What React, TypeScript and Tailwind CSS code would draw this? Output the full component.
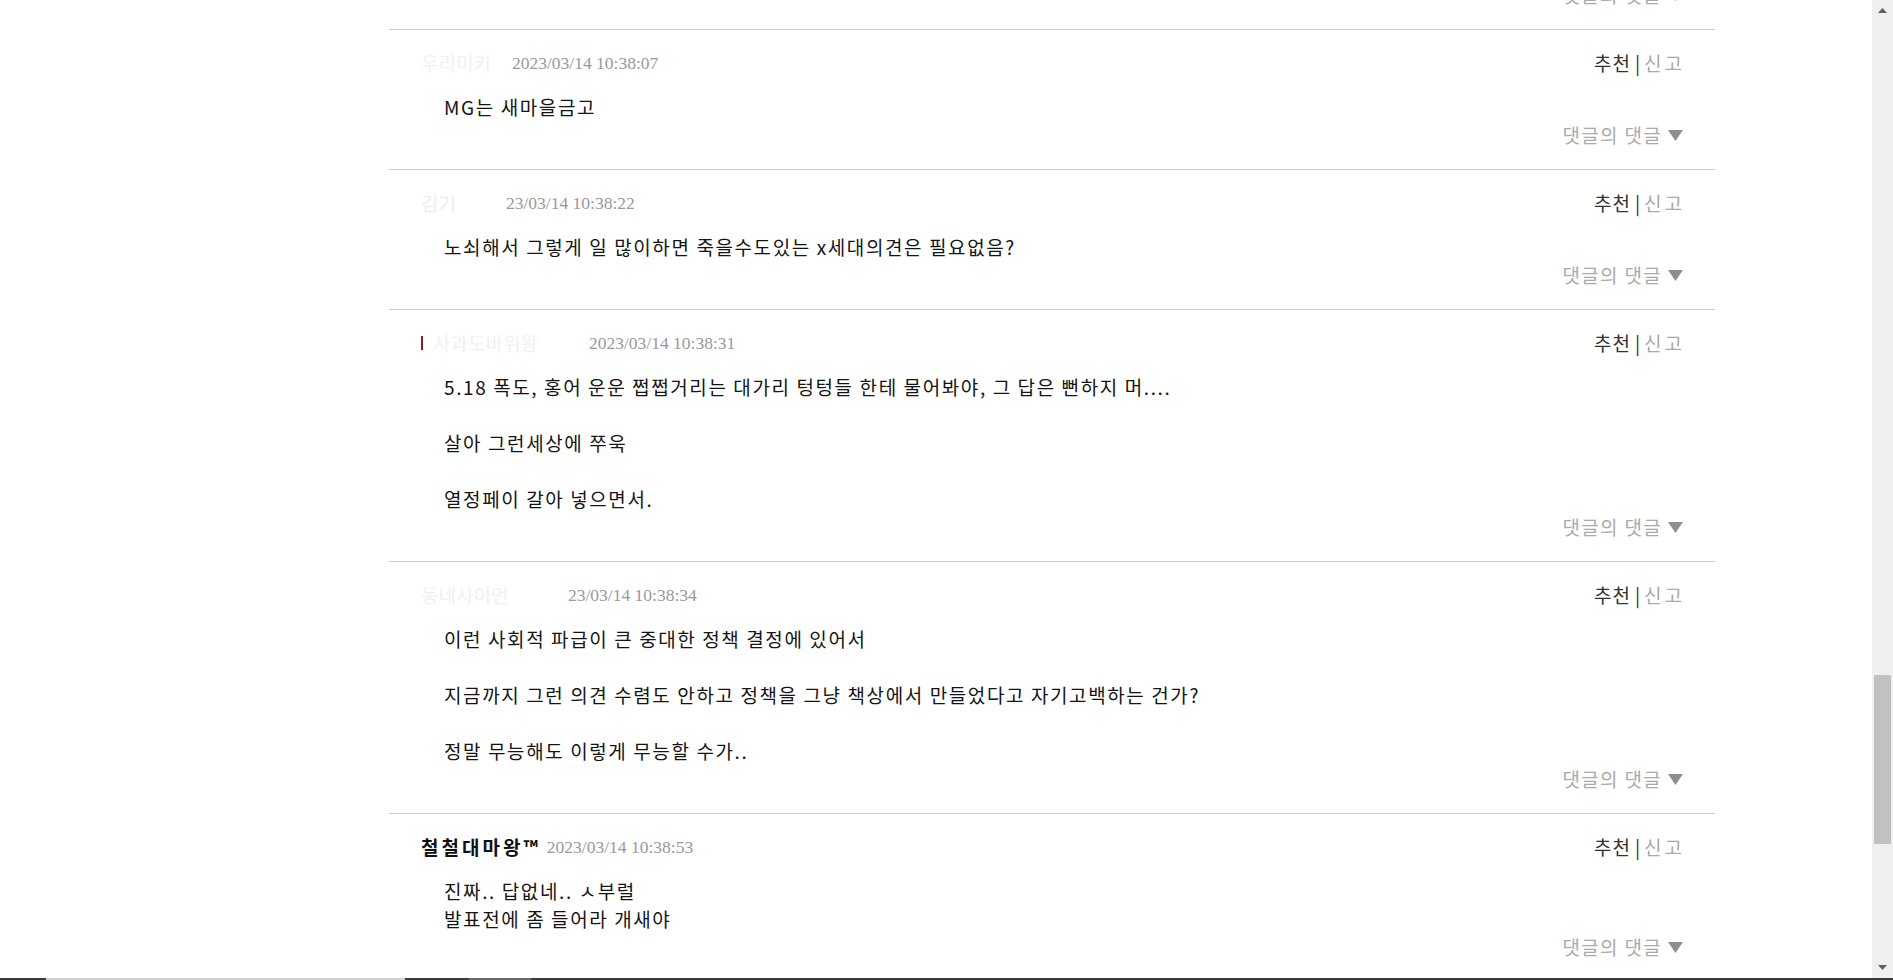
import React from "react";

type Comment = {
  name: string;
  nameCls: string;
  mark?: boolean;
  date: string;
  lines: string[];
};

const comments: Comment[] = [
  {
    name: "우리미키",
    nameCls: "w-[91px] text-[#f1f1f1]",
    date: "2023/03/14 10:38:07",
    lines: ["MG는 새마을금고"],
  },
  {
    name: "김기",
    nameCls: "w-[85px] text-[#ededed]",
    date: "23/03/14 10:38:22",
    lines: ["노쇠해서 그렇게 일 많이하면 죽을수도있는 x세대의견은 필요없음?"],
  },
  {
    name: "사과도바위왕",
    nameCls: "w-[168px] pl-[12px] text-[#f1f1f1]",
    mark: true,
    date: "2023/03/14 10:38:31",
    lines: [
      "5.18 폭도, 홍어 운운 쩝쩝거리는 대가리 텅텅들 한테 물어봐야, 그 답은 뻔하지 머....",
      "",
      "살아 그런세상에 쭈욱",
      "",
      "열정페이 갈아 넣으면서.",
    ],
  },
  {
    name: "동네사이먼",
    nameCls: "w-[147px] text-[#f1f1f1]",
    date: "23/03/14 10:38:34",
    lines: [
      "이런 사회적 파급이 큰 중대한 정책 결정에 있어서",
      "",
      "지금까지 그런 의견 수렴도 안하고 정책을 그냥 책상에서 만들었다고 자기고백하는 건가?",
      "",
      "정말 무능해도 이렇게 무능할 수가..",
    ],
  },
  {
    name: "철철대마왕™",
    nameCls: "mr-[6px] font-bold tracking-[3px] text-[#111]",
    date: "2023/03/14 10:38:53",
    lines: ["진짜.. 답없네.. ㅅ부럴", "발표전에 좀 들어라 개새야"],
  },
];

const ReplyToggle = () => (
  <div className="h-[28px] flex items-center justify-end pr-[32px]">
    <span className="text-[19px] tracking-[1.3px] text-[#aaaaaa]">댓글의 댓글</span>
    <svg width="15" height="11" viewBox="0 0 15 11" className="ml-[6px]">
      <polygon points="0,0 15,0 7.5,11" fill="#8e8e8e" />
    </svg>
  </div>
);

const CommentRow = ({ c }: { c: Comment }) => (
  <div className="border-t border-[#cfcfcf] pt-[20px] pb-[20px]">
    <div className="h-[26px] flex items-center justify-between pl-[32px] pr-[30px]">
      <div className="flex items-center whitespace-nowrap">
        {c.mark && <span className="w-[2px] h-[14px] bg-[#8a1c1c] mr-[-2px]" />}
        <span className={"text-[19px] overflow-hidden whitespace-nowrap " + c.nameCls}>{c.name}</span>
        <span className="font-['Liberation_Serif',serif] text-[17.5px] text-[#999999]">{c.date}</span>
      </div>
      <div className="flex items-center text-[19px]">
        <span className="text-[#333333] tracking-[1px]">추천</span>
        <span className="text-[#333333] px-[4px]">|</span>
        <span className="text-[#aaaaaa] tracking-[3px]">신고</span>
      </div>
    </div>
    <div className="mt-[17px] pl-[55px] text-[19px] leading-[28px] tracking-[1.6px] text-[#141414]">
      {c.lines.map((l, i) => (
        <div key={i} className="min-h-[28px] whitespace-nowrap">
          {l}
        </div>
      ))}
    </div>
    <ReplyToggle />
  </div>
);

export default function App() {
  return (
    <div className="w-[1893px] h-[980px] overflow-hidden bg-white flex flex-col font-['Noto_Sans_CJK_KR','Noto_Sans',sans-serif]">
      <div className="h-[978px] flex">
        <div className="flex-1 overflow-hidden">
          <div className="ml-[389px] w-[1326px]">
            <div className="h-[29px] overflow-hidden flex flex-col justify-end">
              <div className="pb-[20px]">
                <ReplyToggle />
              </div>
            </div>
            {comments.map((c, i) => (
              <CommentRow key={i} c={c} />
            ))}
          </div>
        </div>

        {/* scrollbar */}
        <div className="w-[21px] bg-[#f0f0f0] flex flex-col">
          <div className="h-[21px] flex items-center justify-center">
            <svg width="9" height="5" viewBox="0 0 9 5">
              <polygon points="0,5 9,5 4.5,0" fill="#606060" />
            </svg>
          </div>
          <div className="flex-1">
            <div className="mt-[654px] ml-[2px] w-[17px] h-[169px] bg-[#c1c1c1]" />
          </div>
          <div className="h-[21px] flex items-center justify-center">
            <svg width="9" height="5" viewBox="0 0 9 5">
              <polygon points="0,0 9,0 4.5,5" fill="#606060" />
            </svg>
          </div>
        </div>
      </div>

      <div className="h-[2px] flex">
        <div className="w-[46px] bg-[#3c3c3c]" />
        <div className="w-[359px] bg-[#cfcfcf]" />
        <div className="w-[64px] bg-[#3c3c3c]" />
        <div className="w-[62px] bg-[#6a6a6a]" />
        <div className="flex-1 bg-[#3c3c3c]" />
      </div>
    </div>
  );
}
